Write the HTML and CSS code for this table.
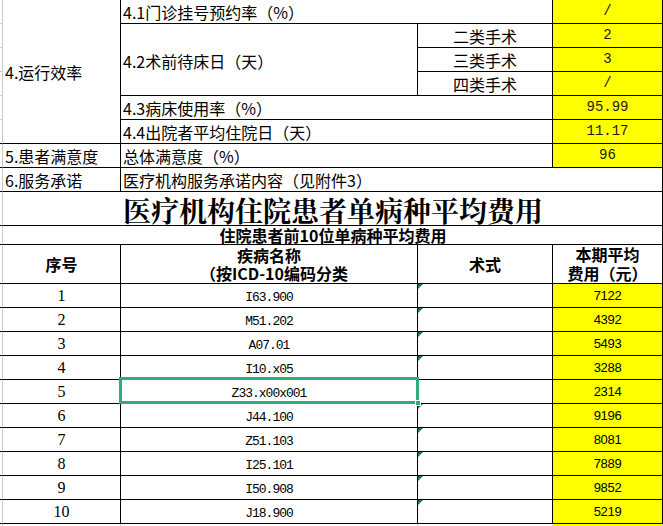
FILE: index.html
```html
<!DOCTYPE html>
<html lang="zh-CN">
<head>
<meta charset="utf-8">
<title>单病种平均费用</title>
<link rel="stylesheet" href="styles.css">
</head>
<body>
<div class="sheet">
  <!-- 4.1 -->
  <div class="stub thin"></div>
  <div class="cell cat rows6">4.运行效率</div>
  <div class="cell lbl cols2">4.1门诊挂号预约率（%）</div>
  <div class="cell val">/</div>
  <!-- 4.2 -->
  <div class="stub thin"></div>
  <div class="cell lbl mid rows3">4.2术前待床日（天）</div>
  <div class="cell sub">二类手术</div>
  <div class="cell val">2</div>
  <div class="stub thin"></div>
  <div class="cell sub">三类手术</div>
  <div class="cell val">3</div>
  <div class="stub thin"></div>
  <div class="cell sub">四类手术</div>
  <div class="cell val">/</div>
  <!-- 4.3 -->
  <div class="stub thin"></div>
  <div class="cell lbl cols2">4.3病床使用率（%）</div>
  <div class="cell val">95.99</div>
  <!-- 4.4 -->
  <div class="stub"></div>
  <div class="cell lbl cols2">4.4出院者平均住院日（天）</div>
  <div class="cell val">11.17</div>
  <!-- 5 -->
  <div class="stub"></div>
  <div class="cell cat">5.患者满意度</div>
  <div class="cell lbl cols2">总体满意度（%）</div>
  <div class="cell val">96</div>
  <!-- 6 -->
  <div class="stub"></div>
  <div class="cell cat">6.服务承诺</div>
  <div class="cell lbl cols3">医疗机构服务承诺内容（见附件3）</div>
  <!-- title -->
  <div class="stub"></div>
  <div class="cell title cols4">医疗机构住院患者单病种平均费用</div>
  <div class="stub"></div>
  <div class="cell subtitle cols4">住院患者前10位单病种平均费用</div>
  <!-- header -->
  <div class="stub"></div>
  <div class="cell head">序号</div>
  <div class="cell head name"><span>疾病名称</span><span class="h2">（按ICD-10编码分类</span></div>
  <div class="cell head">术式</div>
  <div class="cell head">本期平均<br>费用（元）</div>
  <!-- data -->
  <div class="stub"></div><div class="cell num">1</div><div class="cell code">I63.900</div><div class="cell mark"></div><div class="cell amt">7122</div>
  <div class="stub"></div><div class="cell num">2</div><div class="cell code">M51.202</div><div class="cell mark"></div><div class="cell amt">4392</div>
  <div class="stub"></div><div class="cell num">3</div><div class="cell code">A07.01</div><div class="cell mark"></div><div class="cell amt">5493</div>
  <div class="stub"></div><div class="cell num">4</div><div class="cell code">I10.x05</div><div class="cell mark"></div><div class="cell amt">3288</div>
  <div class="stub"></div><div class="cell num">5</div><div class="cell code selected">Z33.x00x001<span class="sel"></span><span class="handle"></span></div><div class="cell"></div><div class="cell amt">2314</div>
  <div class="stub"></div><div class="cell num">6</div><div class="cell code">J44.100</div><div class="cell mark"></div><div class="cell amt">9196</div>
  <div class="stub"></div><div class="cell num">7</div><div class="cell code">Z51.103</div><div class="cell mark"></div><div class="cell amt">8081</div>
  <div class="stub"></div><div class="cell num">8</div><div class="cell code">I25.101</div><div class="cell mark"></div><div class="cell amt">7889</div>
  <div class="stub"></div><div class="cell num">9</div><div class="cell code">I50.908</div><div class="cell mark"></div><div class="cell amt">9852</div>
  <div class="stub"></div><div class="cell num">10</div><div class="cell code">J18.900</div><div class="cell mark"></div><div class="cell amt">5219</div>
  <!-- tail -->
  <div class="stub tail"></div><div class="cell tail"></div><div class="cell tail"></div><div class="cell tail"></div><div class="cell tail amt"></div>
</div>
</body>
</html>
```

FILE: styles.css
```css
* { box-sizing: border-box; }
html, body { margin: 0; padding: 0; background: #fff; }
body {
  width: 663px;
  height: 526px;
  overflow: hidden;
  font-family: "Noto Sans CJK SC", sans-serif;
  font-size: 16px;
  color: #000;
}
.sheet {
  display: grid;
  grid-template-columns: 3px 118px 297px 135px 110px;
  grid-template-rows: repeat(8, 24px) 34px 19px 39px repeat(10, 24px) 2px;
}
.stub {
  border-right: 1px solid #c9c9c9;
  border-bottom: 1px solid #000;
}
.stub.thin { border-bottom-color: #d0d0d0; }
.stub.tail { border-bottom: 0; }
.cell {
  border-right: 1px solid #000;
  border-bottom: 1px solid #000;
  display: flex;
  align-items: flex-end;
  justify-content: flex-start;
  overflow: hidden;
  white-space: nowrap;
  line-height: 20px;
  padding: 0 0 1px 0;
  position: relative;
}
.cell.tail { border-bottom: 0; border-right-color: #d0d0d0; }
.rows6 { grid-row: span 6; }
.rows3 { grid-row: span 3; }
.cols2 { grid-column: span 2; }
.cols3 { grid-column: span 3; }
.cols4 { grid-column: span 4; }

.cat { padding-left: 2px; }
.cat.rows6 { align-items: center; padding-top: 2px; }
.lbl { padding-left: 2px; }
.lbl.mid { align-items: center; padding-top: 4px; }
.sub { justify-content: center; }
.val {
  background: #ffff00;
  justify-content: center;
  font-family: "Liberation Mono", monospace;
  font-size: 14px;
  color: #1a1a1a;
  padding-bottom: 2px;
}

.title {
  justify-content: center;
  align-items: center;
  font-family: "Noto Serif CJK SC", "Noto Sans CJK SC", serif;
  font-weight: 700;
  font-size: 28px;
  line-height: 32px;
  padding: 2px 0 0 1px;
}
.subtitle {
  justify-content: center;
  font-weight: 700;
  line-height: 18px;
  padding: 0 0 0 1px;
}

.head {
  flex-direction: column;
  align-items: center;
  justify-content: center;
  text-align: center;
  font-weight: 700;
  line-height: 19px;
  padding: 0;
}
.head.name { line-height: 18px; }
.head .h2 { margin-left: 10px; }

.num {
  justify-content: center;
  align-items: center;
  font-family: "Liberation Serif", serif;
  font-size: 16px;
  padding: 0;
}
.code {
  justify-content: center;
  font-family: "Liberation Mono", monospace;
  font-size: 13px;
  letter-spacing: -1px;
  line-height: 16px;
  padding-bottom: 1px;
}
.amt {
  background: #ffff00;
  justify-content: center;
  align-items: center;
  font-family: "Liberation Sans", sans-serif;
  font-size: 13px;
  letter-spacing: -0.3px;
  padding-top: 2px;
}
.mark::before {
  content: "";
  position: absolute;
  left: 0;
  top: 0;
  border-top: 5px solid #1e7b3c;
  border-right: 5px solid transparent;
}
.selected { overflow: visible; z-index: 2; }
.sel {
  position: absolute;
  left: -2px;
  top: -3px;
  width: 300px;
  height: 27px;
  border: 3px solid #30ab7b;
}
.handle {
  position: absolute;
  left: 294px;
  top: 20px;
  width: 6px;
  height: 6px;
  background: #30ab7b;
  border: 1px solid #fff;
}
```
